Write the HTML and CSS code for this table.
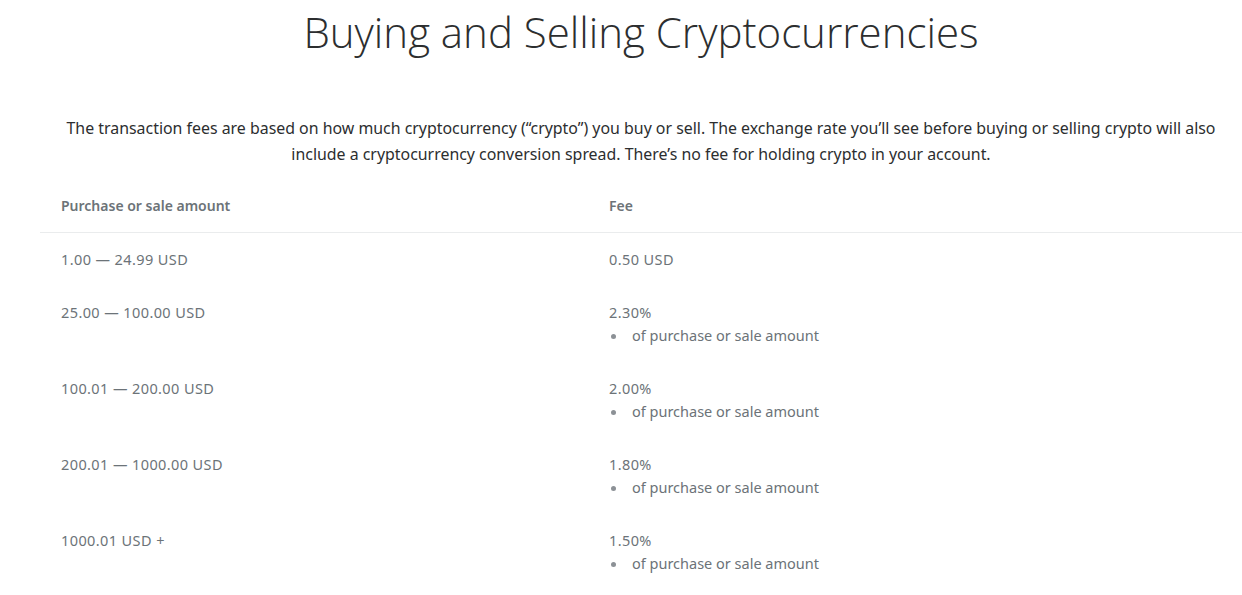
FILE: index.html
```html
<!DOCTYPE html>
<html lang="en">
<head>
<meta charset="utf-8">
<title>Buying and Selling Cryptocurrencies</title>
<link rel="stylesheet" href="styles.css">
</head>
<body>
<main class="page">
  <h1 class="title">Buying and Selling Cryptocurrencies</h1>
  <p class="intro">The transaction fees are based on how much cryptocurrency (“crypto”) you buy or sell. The exchange rate you’ll see before buying or selling crypto will also include a cryptocurrency conversion spread. There’s no fee for holding crypto in your account.</p>
  <div class="fees">
    <div class="row head">
      <div class="cell">Purchase or sale amount</div>
      <div class="cell">Fee</div>
    </div>
    <div class="row">
      <div class="cell amount">1.00 — 24.99 USD</div>
      <div class="cell"><span class="value">0.50 USD</span></div>
    </div>
    <div class="row">
      <div class="cell amount">25.00 — 100.00 USD</div>
      <div class="cell"><span class="value">2.30%</span><ul class="note"><li>of purchase or sale amount</li></ul></div>
    </div>
    <div class="row">
      <div class="cell amount">100.01 — 200.00 USD</div>
      <div class="cell"><span class="value">2.00%</span><ul class="note"><li>of purchase or sale amount</li></ul></div>
    </div>
    <div class="row">
      <div class="cell amount">200.01 — 1000.00 USD</div>
      <div class="cell"><span class="value">1.80%</span><ul class="note"><li>of purchase or sale amount</li></ul></div>
    </div>
    <div class="row">
      <div class="cell amount">1000.01 USD +</div>
      <div class="cell"><span class="value">1.50%</span><ul class="note"><li>of purchase or sale amount</li></ul></div>
    </div>
  </div>
</main>
</body>
</html>
```
FILE: styles.css
```css
html, body {
  margin: 0;
  padding: 0;
  background: #ffffff;
}
body {
  font-family: "Noto Sans", "Open Sans", sans-serif;
  color: #2c2e2f;
}
.page {
  display: flex;
  flex-direction: column;
  padding-left: 40px;
}
.title {
  margin: 0;
  padding-top: 5px;
  font-family: "Open Sans", sans-serif;
  font-weight: 300;
  font-size: 42px;
  line-height: 54px;
  text-align: center;
  color: #2c2e2f;
}
.intro {
  margin: 56px 0 0;
  padding: 0 20px;
  font-size: 15.9px;
  line-height: 26px;
  text-align: center;
  color: #2c2e2f;
}
.fees {
  margin-top: 23px;
  font-size: 14.5px;
  line-height: 23px;
  color: #6c7378;
}
.row {
  display: grid;
  grid-template-columns: 548px 1fr;
}
.cell {
  padding: 15px 21px;
}
.amount,
.value {
  letter-spacing: 0.4px;
}
.head {
  border-bottom: 1px solid #eaeced;
  font-weight: 600;
  font-size: 14px;
}
.head .cell {
  padding: 4px 21px 15px;
}
.note {
  margin: 0;
  padding: 0 0 0 23px;
  list-style: none;
}
.note li {
  position: relative;
}
.note li::before {
  content: "";
  position: absolute;
  left: -21px;
  top: 10px;
  width: 5px;
  height: 5px;
  border-radius: 50%;
  background: #8c9196;
}
```
